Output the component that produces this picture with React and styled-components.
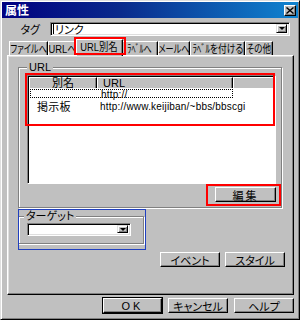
import React from "react"
import styled, { createGlobalStyle } from "styled-components"

const GlobalStyle = createGlobalStyle`
  html, body {
    margin: 0;
    padding: 0;
    background: #c0c0c0;
  }
  body {
    font-family: "Liberation Sans", "Noto Sans CJK JP", sans-serif;
    font-size: 11px;
    font-feature-settings: "palt";
    color: #000;
  }
`

const Screen = styled.div`
  position: relative;
  width: 300px;
  height: 320px;
  overflow: hidden;
`

const Window = styled.div`
  width: 300px;
  height: 320px;
  box-sizing: border-box;
  background: #c0c0c0;
  border-top: 1px solid #dfdfdf;
  border-left: 1px solid #dfdfdf;
  border-right: 1px solid #000;
  border-bottom: 1px solid #000;
  box-shadow: inset 1px 1px 0 #fff, inset -1px -1px 0 #808080;
  padding: 1px;
  display: flex;
  flex-direction: column;
`

const TitleBar = styled.div`
  height: 16px;
  flex: none;
  display: flex;
  align-items: center;
  justify-content: space-between;
  padding: 0 2px 0 3px;
  background: linear-gradient(90deg, #000080 0%, #0a2a8c 40%, #1084d0 100%);
`

const Title = styled.span`
  color: #fff;
  font-family: "Noto Sans CJK JP", sans-serif;
  font-weight: 700;
  font-size: 12px;
  line-height: 16px;
`

const CloseButton = styled.div`
  width: 12px;
  height: 11px;
  box-sizing: border-box;
  background: #c0c0c0;
  border-top: 1px solid #fff;
  border-left: 1px solid #fff;
  border-right: 1px solid #000;
  border-bottom: 1px solid #000;
  box-shadow: inset -1px -1px 0 #808080;
  display: flex;
  align-items: center;
  justify-content: center;
`

const Body = styled.div`
  flex: 1;
  display: flex;
  flex-direction: column;
  padding: 0 4px 0 5px;
`

const TagRow = styled.div`
  display: grid;
  grid-template-columns: 43px 240px;
  align-items: center;
  margin-top: 4px;
`

const Label = styled.span`
  font-family: "Noto Sans CJK JP", sans-serif;
  font-size: 11px;
  line-height: 12px;
  white-space: nowrap;
  text-align: right;
  padding-right: 10px;
`

const Combo = styled.div`
  width: ${p => p.$w}px;
  height: ${p => p.$h}px;
  box-sizing: border-box;
  background: #fff;
  border-top: 1px solid #808080;
  border-left: 1px solid #808080;
  border-right: 1px solid #fff;
  border-bottom: 1px solid #fff;
  box-shadow: inset 1px 1px 0 #000, inset -1px -1px 0 #dfdfdf;
  display: flex;
  align-items: center;
  padding: 1px 2px 2px 2px;
`

const ComboText = styled.span`
  flex: 1;
  display: flex;
  align-items: center;
  font-family: "Noto Sans CJK JP", sans-serif;
  font-size: 11px;
  line-height: 10px;
`

const Caret = styled.i`
  width: 1px;
  height: 10px;
  background: #000;
  margin-right: 1px;
`

const DropButton = styled.div`
  width: 11px;
  height: 100%;
  box-sizing: border-box;
  background: #c0c0c0;
  border-top: 1px solid #dfdfdf;
  border-left: 1px solid #dfdfdf;
  border-right: 1px solid #000;
  border-bottom: 1px solid #000;
  box-shadow: inset 1px 1px 0 #fff, inset -1px -1px 0 #808080;
  display: flex;
  align-items: center;
  justify-content: center;
  &::after {
    content: "";
    border-left: 3px solid transparent;
    border-right: 3px solid transparent;
    border-top: 3px solid #000;
  }
`

const TabBar = styled.div`
  display: flex;
  align-items: flex-end;
  height: 16px;
  margin-top: 3px;
  padding-left: 2px;
  position: relative;
  z-index: 1;
`

const Tab = styled.div`
  width: ${p => p.$w}px;
  flex: none;
  height: ${p => (p.$active ? 17 : 14)}px;
  margin: 0 ${p => (p.$active ? -1 : 0)}px ${p => (p.$active ? -1 : 0)}px;
  padding-bottom: ${p => (p.$active ? 2 : 0)}px;
  box-sizing: border-box;
  background: #c0c0c0;
  border-top: 1px solid #fff;
  border-left: 1px solid #fff;
  border-right: 1px solid #000;
  box-shadow: inset -1px 0 0 #808080;
  display: flex;
  align-items: center;
  justify-content: center;
  white-space: nowrap;
  position: relative;
  z-index: ${p => (p.$active ? 2 : 1)};
`

const TabText = styled.span`
  display: inline-block;
  font-family: "Liberation Sans", "Noto Sans CJK JP", sans-serif;
  font-size: 11px;
  line-height: 12px;
  transform: scaleX(${p => p.$sx || 0.74});
  transform-origin: center;
`

const Panel = styled.div`
  height: 240px;
  box-sizing: border-box;
  border-top: 1px solid #fff;
  border-left: 1px solid #fff;
  border-right: 1px solid #000;
  border-bottom: 1px solid #000;
  box-shadow: inset -1px -1px 0 #808080, inset 1px 1px 0 #dfdfdf;
  padding: 5px 8px 0 10px;
  display: flex;
  flex-direction: column;
`

const Group = styled.fieldset`
  margin: ${p => p.$top || 0}px 0 0;
  width: ${p => p.$w}px;
  box-sizing: border-box;
  border: 1px solid #808080;
  box-shadow: 1px 1px 0 #fff, inset 1px 1px 0 #fff;
  padding: ${p => p.$pad};
  display: flex;
  flex-direction: column;
`

const Legend = styled.legend`
  padding: 0 2px;
  margin-left: ${p => p.$indent || 0}px;
  font-family: "Liberation Sans", "Noto Sans CJK JP", sans-serif;
  font-size: 11px;
  line-height: 12px;
  height: 12px;
  background: #c0c0c0;
`

const ListView = styled.div`
  height: 109px;
  box-sizing: border-box;
  background: #fff;
  border-top: 1px solid #808080;
  border-left: 1px solid #808080;
  border-right: 1px solid #fff;
  border-bottom: 1px solid #fff;
  box-shadow: inset 1px 1px 0 #000;
  padding: 1px 0 0 1px;
  font-size: 10px;
`

const Columns = styled.div`
  display: grid;
  grid-template-columns: 68px 136px 1fr;
  height: ${p => p.$h}px;
  align-items: center;
`

const HeadCell = styled.div`
  height: 100%;
  box-sizing: border-box;
  background: #c0c0c0;
  border-top: 1px solid #fff;
  border-left: 1px solid #fff;
  border-right: 1px solid #000;
  box-shadow: inset -1px 0 0 #808080;
  display: flex;
  align-items: center;
  justify-content: ${p => (p.$center ? "center" : "flex-start")};
  padding-left: ${p => (p.$center ? 0 : 5)}px;
  font-family: "Liberation Sans", "Noto Sans CJK JP", sans-serif;
  font-size: 11px;
  line-height: 10px;
`

const Focus = styled.div`
  grid-column: 1 / 3;
  height: 9px;
  margin: 1px 0 0 1px;
  box-sizing: border-box;
  border: 1px dotted #000;
  padding-left: 70px;
  font-size: 10px;
  line-height: 9px;
  letter-spacing: 0.2px;
  white-space: nowrap;
`

const Cell = styled.div`
  padding-left: ${p => p.$pad}px;
  font-family: "Liberation Sans", "Noto Sans CJK JP", sans-serif;
  font-size: ${p => p.$size || 10}px;
  white-space: nowrap;
  letter-spacing: 0.2px;
`

const ButtonRow = styled.div`
  display: flex;
  justify-content: flex-end;
  gap: ${p => p.$gap || 5}px;
  margin-top: ${p => p.$top || 0}px;
  padding-right: ${p => p.$right || 0}px;
`

const Button = styled.div`
  width: ${p => p.$w}px;
  height: 15px;
  box-sizing: border-box;
  background: #c0c0c0;
  border-top: 1px solid #fff;
  border-left: 1px solid #fff;
  border-right: 1px solid #000;
  border-bottom: 1px solid #000;
  box-shadow: inset -1px -1px 0 #808080
    ${p => (p.$default ? ", 0 0 0 1px #000" : "")};
  display: flex;
  align-items: center;
  justify-content: center;
  font-family: "Liberation Sans", "Noto Sans CJK JP", sans-serif;
  font-size: 11px;
  letter-spacing: ${p => p.$spacing || 0}px;
`

const Marker = styled.div`
  position: absolute;
  left: ${p => p.$x}px;
  top: ${p => p.$y}px;
  width: ${p => p.$w}px;
  height: ${p => p.$h}px;
  box-sizing: border-box;
  border: ${p => p.$b}px solid ${p => p.$c};
  pointer-events: none;
  z-index: 5;
`

const tabs = [
  { label: "ファイルへ", w: 39 },
  { label: "URLへ", w: 29, sx: 0.85 },
  { label: "URL別名", w: 47, sx: 0.85, active: true },
  { label: "ﾗﾍﾞﾙへ", w: 36 },
  { label: "メールへ", w: 32 },
  { label: "ﾗﾍﾞﾙを付ける", w: 55, sx: 0.8 },
  { label: "その他", w: 28, sx: 0.78 },
]

export default function App() {
  return (
    <Screen>
      <GlobalStyle />
      <Window>
        <TitleBar>
          <Title>属性</Title>
          <CloseButton>
            <svg width="8" height="7" viewBox="0 0 8 7">
              <path d="M0.5 0.5 L7.5 6.5 M7.5 0.5 L0.5 6.5" stroke="#000" strokeWidth="1.4" />
            </svg>
          </CloseButton>
        </TitleBar>
        <Body>
          <TagRow>
            <Label>タグ</Label>
            <Combo $w={240} $h={14}>
              <ComboText>
                <Caret />
                リンク
              </ComboText>
              <DropButton />
            </Combo>
          </TagRow>
          <TabBar>
            {tabs.map(t => (
              <Tab key={t.label} $w={t.w} $active={t.active}>
                <TabText $sx={t.sx}>{t.label}</TabText>
              </Tab>
            ))}
          </TabBar>
          <Panel>
            <Group $w={264} $pad="2px 5px 5px 8px">
              <Legend>URL</Legend>
              <ListView>
                <Columns $h={10}>
                  <HeadCell $center>別名</HeadCell>
                  <HeadCell>URL</HeadCell>
                  <HeadCell />
                </Columns>
                <Columns $h={11}>
                  <Focus>http://</Focus>
                </Columns>
                <Columns $h={14}>
                  <Cell $pad={8} $size={11}>掲示板</Cell>
                  <Cell $pad={3}>http://www.keijiban/~bbs/bbscgi</Cell>
                </Columns>
              </ListView>
              <ButtonRow $top={3}>
                <Button $w={61} $spacing={2}>編集</Button>
              </ButtonRow>
            </Group>
            <Group $w={126} $top={2} $pad="1px 10px 7px 8px">
              <Legend $indent={-3}>ターゲット</Legend>
              <Combo $w={104} $h={13}>
                <ComboText />
                <DropButton />
              </Combo>
            </Group>
            <ButtonRow $top={8} $gap={5}>
              <Button $w={60}>イベント</Button>
              <Button $w={60}>スタイル</Button>
            </ButtonRow>
          </Panel>
          <ButtonRow $top={3} $gap={6}>
            <Button $w={59} $default $spacing={3}>OK</Button>
            <Button $w={60}>キャンセル</Button>
            <Button $w={60}>ヘルプ</Button>
          </ButtonRow>
        </Body>
      </Window>
      <Marker $x={74} $y={37} $w={52} $h={18} $b={2} $c="#ff0000" />
      <Marker $x={25} $y={73} $w={250} $h={53} $b={2} $c="#ff0000" />
      <Marker $x={206} $y={184} $w={75} $h={22} $b={2} $c="#ff0000" />
      <Marker $x={18} $y={209} $w={128} $h={41} $b={1} $c="#2040c0" />
    </Screen>
  )
}
